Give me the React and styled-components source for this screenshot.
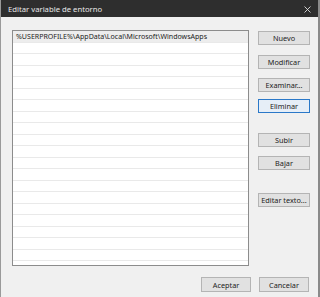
import React from "react";
import styled, { createGlobalStyle } from "styled-components";

const Global = createGlobalStyle`
  html, body { margin: 0; padding: 0; background: #f0f0f0; }
  body { font-family: "Noto Sans", "Liberation Sans", sans-serif; }
`;

const Window = styled.div`
  width: 320px;
  height: 297px;
  box-sizing: border-box;
  display: flex;
  flex-direction: column;
  background: #f0f0f0;
  border-left: 1px solid #9a9a9a;
  border-right: 2px solid #8a8a8a;
  overflow: hidden;
`;

const TitleBar = styled.div`
  height: 17px;
  flex: none;
  background: #2e2e2e;
  display: flex;
  align-items: center;
  justify-content: space-between;
  padding: 0 7px 0 7px;
  color: #e8e8e8;
  font-size: 7.7px;
`;

const Close = styled.svg`
  width: 7px;
  height: 7px;
  margin-top: 1px;
`;

const Body = styled.div`
  flex: 1;
  display: flex;
  flex-direction: column;
  padding: 13px 8px 0 11px;
`;

const Main = styled.div`
  display: flex;
  gap: 9px;
`;

const List = styled.div`
  width: 237px;
  height: 236px;
  box-sizing: border-box;
  border: 1px solid #8c8c8c;
  background: #fff;
  overflow: hidden;
`;

const Row = styled.div`
  height: 11.5px;
  box-sizing: border-box;
  border-bottom: 1px solid #e9e9e9;
  background: ${(p) => (p.$selected ? "#ededed" : "#fff")};
  font-size: 7.05px;
  line-height: 11px;
  padding-left: 3px;
  color: #222;
  white-space: nowrap;
`;

const Side = styled.div`
  display: flex;
  flex-direction: column;
  width: 52px;
  padding-top: 1px;
`;

const Button = styled.div`
  width: 52px;
  height: 14px;
  box-sizing: border-box;
  border: 1px solid ${(p) => (p.$focused ? "#2a78c8" : "#b4b4b4")};
  background: ${(p) => (p.$focused ? "#e6eef7" : "#e1e1e1")};
  font-size: 7.3px;
  color: #222;
  display: flex;
  align-items: center;
  justify-content: center;
  margin-top: ${(p) => p.$gap || 0}px;
  white-space: nowrap;
`;

const Footer = styled.div`
  display: flex;
  justify-content: flex-end;
  gap: 8px;
  margin-top: 11px;
  padding-right: 1px;
`;

const FooterButton = styled(Button)`
  width: 50px;
  height: 15px;
`;

const rows = Array.from({ length: 21 }, (_, i) => i);

export default function App() {
  return (
    <>
      <Global />
      <Window>
        <TitleBar>
          <span>Editar variable de entorno</span>
          <Close viewBox="0 0 7 7">
            <path d="M0.5 0.5 L6.5 6.5 M6.5 0.5 L0.5 6.5" stroke="#e0e0e0" strokeWidth="0.9" />
          </Close>
        </TitleBar>
        <Body>
          <Main>
            <List>
              {rows.map((i) => (
                <Row key={i} $selected={i === 0}>
                  {i === 0 ? "%USERPROFILE%\\AppData\\Local\\Microsoft\\WindowsApps" : ""}
                </Row>
              ))}
            </List>
            <Side>
              <Button>Nuevo</Button>
              <Button $gap={10}>Modificar</Button>
              <Button $gap={9}>Examinar...</Button>
              <Button $gap={7} $focused>Eliminar</Button>
              <Button $gap={20}>Subir</Button>
              <Button $gap={9}>Bajar</Button>
              <Button $gap={23}>Editar texto...</Button>
            </Side>
          </Main>
          <Footer>
            <FooterButton>Aceptar</FooterButton>
            <FooterButton>Cancelar</FooterButton>
          </Footer>
        </Body>
      </Window>
    </>
  );
}
